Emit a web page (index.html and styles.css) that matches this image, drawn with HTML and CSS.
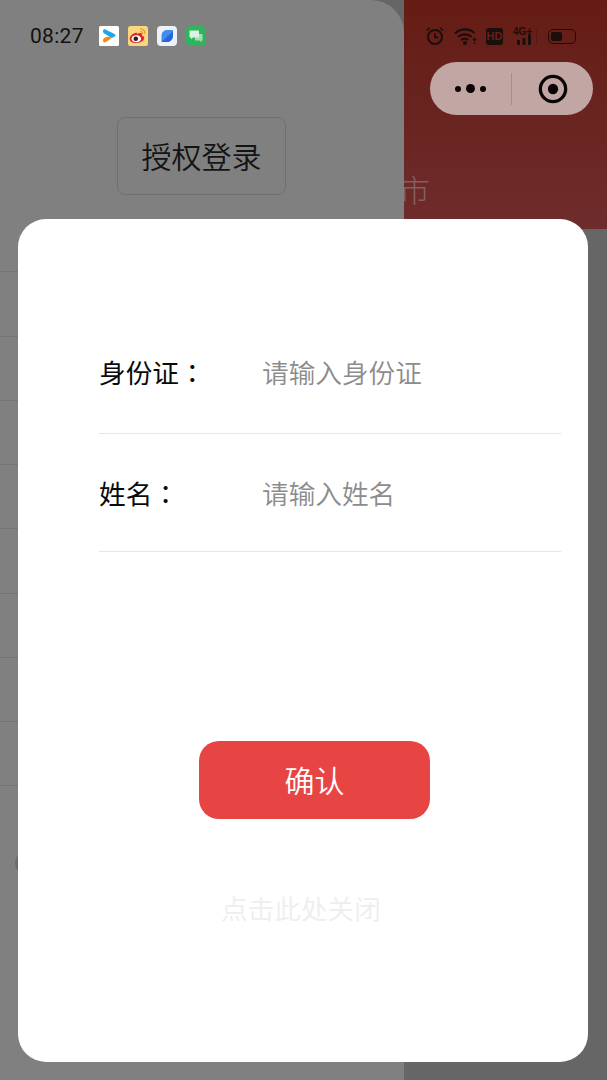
FILE: index.html
```html
<!DOCTYPE html>
<html lang="zh-CN">
  <head>
    <meta charset="UTF-8" />
    <meta name="viewport" content="width=device-width, initial-scale=1.0" />
    <title>授权登录</title>
    <link rel="stylesheet" href="styles.css">
  </head>
  <body>
    <div class="stage">
      <!--Side drawer-->
      <div class="drawer">
        <a href="" class="login">授权登录</a>
        <div class="rows">
          <div class="row"></div>
          <div class="row"></div>
          <div class="row"></div>
          <div class="row"></div>
          <div class="row"></div>
          <div class="row"></div>
          <div class="row"></div>
          <div class="row"></div>
          <div class="row"></div>
        </div>
        <div class="avatar"></div>
      </div>

      <!--Page behind the drawer-->
      <div class="page">
        <div class="header">
          <div class="city">市</div>
        </div>
      </div>

      <!--Status bar-->
      <div class="status">
        <div class="status-left">
          <span class="time">08:27</span>
          <svg class="app" viewBox="0 0 20 20">
            <rect width="20" height="20" rx="1.5" fill="#fff" />
            <path d="M4 5c0-1.500 1.400-2 2.500-1.400L15.500 8c1.300.7 1.300 2 0 2.700L12.500 12 9 9.800 5.300 7.600C4.400 7 4 6.200 4 5z" fill="#1aa7ee" />
            <path d="M4 14.500c0-2 1.500-3.200 3.500-3.500l3-.6 2 1.800-6 4C5.300 17 4 16 4 14.500z" fill="#f28a1c" />
          </svg>
          <svg class="app" viewBox="0 0 20 20">
            <rect width="20" height="20" rx="2.500" fill="#f9d77e" />
            <path d="M8.500 6.500C4.500 7.500 1.500 10.300 1.700 13c.2 2.600 3.300 4.300 7.100 4.100 4.200-.2 7.400-2.500 7.400-5 0-1.500-1.400-2.200-2.400-2.500.5-1.300.2-2.300-1-2.600-1.100-.3-2.600.1-3.900.9-.1-.6 0-1-.4-1.400z" fill="#e0242c" />
            <ellipse cx="8.300" cy="12.700" rx="4.800" ry="3.500" fill="#fff" />
            <circle cx="7.800" cy="12.800" r="2.300" fill="#222" />
            <path d="M12 3c2.800-.5 5.300 2 4.800 5M12.300 5.500c1.300-.2 2.400 1 2.200 2.300" fill="none" stroke="#f08a24" stroke-width="1.100" />
          </svg>
          <svg class="app" viewBox="0 0 20 20">
            <rect width="20" height="20" rx="4" fill="#eef2f8" />
            <path d="M4.500 10c0-3.500 2.300-6 5.500-6h6v6c0 3.500-2.500 6-5.800 6H4.500z" fill="#3f8df0" />
            <path d="M4.500 16L15.800 5.500c.9 4.500-.9 10.500-5.600 10.500z" fill="#2862dc" />
          </svg>
          <svg class="app" viewBox="0 0 20 20">
            <rect width="20" height="20" rx="4.500" fill="#2fb35c" />
            <path d="M9 8h7.500v6.500h-1V16l-2-1.500H9z" fill="#a5dcb3" />
            <path d="M3.500 4.500h9.500v7H7L5 13.200v-1.700H3.500z" fill="#dcf1e1" />
          </svg>
        </div>
        <div class="status-right">
          <svg class="alarm" viewBox="0 0 20 20">
            <circle cx="10" cy="11" r="7" fill="none" stroke="#1c0e0b" stroke-width="2" />
            <path d="M10 7v4.300h3.200M2 4.500L4.500 2M18 4.500L15.500 2" fill="none" stroke="#1c0e0b" stroke-width="1.700" />
          </svg>
          <svg class="wifi" viewBox="0 0 24 18">
            <path d="M1 6.500C6.500 1.200 15 1 20.500 6M4 10c3.800-3.400 9.500-3.500 13.500-.2M7.300 13c2-1.500 5-1.500 7 0" fill="none" stroke="#1c0e0b" stroke-width="2.200" />
            <circle cx="11" cy="16" r="2" fill="#1c0e0b" />
            <path d="M20.500 10.500v3M18.800 12l1.700 1.700 1.700-1.700M20.500 17v-2" fill="none" stroke="#1c0e0b" stroke-width="1.300" />
          </svg>
          <span class="hd">HD</span>
          <div class="signal">
            <span class="net">4G+</span>
            <svg class="bars" viewBox="0 0 14 11">
              <path d="M0 6h3v5H0zM5.500 4h3v7h-3zM11 0h3v11h-3z" fill="#1c0e0b" />
            </svg>
          </div>
          <span class="sep"></span>
          <div class="battery"><span class="level"></span></div>
        </div>
      </div>

      <!--Capsule button-->
      <div class="capsule">
        <div class="more">
          <span class="dot"></span>
          <span class="dot big"></span>
          <span class="dot"></span>
        </div>
        <span class="capsule-line"></span>
        <svg class="target" viewBox="0 0 32 32">
          <circle cx="16" cy="16" r="13.500" fill="none" stroke="#0a0505" stroke-width="3.500" />
          <circle cx="16" cy="16" r="5.500" fill="#0a0505" />
        </svg>
      </div>

      <!--Login dialog-->
      <div class="modal">
        <div class="form">
          <div class="field first">
            <span class="label">身份证<span class="colon" lang="zh-TW">：</span></span>
            <span class="hint">请输入身份证</span>
          </div>
          <div class="field">
            <span class="label">姓名<span class="colon" lang="zh-TW">：</span></span>
            <span class="hint">请输入姓名</span>
          </div>
        </div>
        <a href="" class="confirm">确认</a>
        <div class="close">点击此处关闭</div>
      </div>
    </div>
  </body>
</html>
```

FILE: styles.css
```css
body {
  margin: 0;
  padding: 0;
  font-family: "Noto Sans CJK SC", "Noto Sans", sans-serif;
}
a {
  text-decoration: none;
}
.stage {
  width: 607px;
  height: 1080px;
  position: relative;
  display: flex;
  overflow: hidden;
  background: #666666;
}

/* drawer */
.drawer {
  width: 404px;
  flex-shrink: 0;
  position: relative;
  z-index: 1;
  padding-top: 117px;
  box-sizing: border-box;
  background: #808080;
  border-top-right-radius: 33px;
}
.login {
  display: block;
  width: 169px;
  height: 78px;
  margin-left: 117px;
  box-sizing: border-box;
  border: 1px solid #6f6f6f;
  border-radius: 8px;
  color: #141414;
  font-size: 30px;
  font-weight: 350;
  line-height: 74px;
  text-align: center;
}
.rows {
  margin-top: 13px;
}
.row {
  height: 64.25px;
  box-sizing: border-box;
  border-bottom: 1px solid #747474;
}
.avatar {
  width: 24px;
  height: 24px;
  margin: 65px 0 0 15px;
  border-radius: 50%;
  background: #6c6c6c;
}

/* page behind */
.page {
  flex: 1;
}
.header {
  height: 229px;
  padding-top: 167px;
  box-sizing: border-box;
  background: linear-gradient(#651c14, #6e2c2c);
}
.city {
  margin-left: -5px;
  color: #82605e;
  font-size: 31px;
  font-weight: 300;
  line-height: 44px;
}

/* status bar */
.status {
  position: absolute;
  z-index: 2;
  top: 24px;
  left: 30px;
  width: 546px;
  height: 24px;
  display: flex;
  align-items: center;
  justify-content: space-between;
}
.status-left {
  display: flex;
  align-items: center;
  gap: 9px;
}
.time {
  width: 60px;
  color: #111;
  font-family: Roboto, sans-serif;
  font-size: 21px;
  letter-spacing: 0.3px;
}
.app {
  width: 20px;
  height: 20px;
}
.status-right {
  display: flex;
  align-items: center;
}
.alarm {
  width: 20px;
  height: 20px;
}
.wifi {
  width: 24px;
  height: 18px;
  margin-left: 9px;
}
.hd {
  width: 17px;
  height: 17px;
  margin-left: 8px;
  border-radius: 3px;
  background: #1c0e0b;
  color: #6a2018;
  font-family: "Liberation Sans", sans-serif;
  font-size: 11px;
  font-weight: 700;
  line-height: 17px;
  text-align: center;
}
.signal {
  width: 20px;
  height: 17px;
  margin-left: 10px;
  display: flex;
  flex-direction: column;
}
.net {
  color: #1c0e0b;
  font-family: "Liberation Sans", sans-serif;
  font-size: 10px;
  font-weight: 700;
  line-height: 8px;
}
.bars {
  width: 14px;
  height: 11px;
  margin: -2px 0 0 4px;
}
.sep {
  width: 1px;
  height: 16px;
  margin-left: 3px;
  background: #54191a;
}
.battery {
  width: 28px;
  height: 15px;
  margin-left: 11px;
  padding: 2px;
  box-sizing: border-box;
  border: 1.500px solid #1c0e0b;
  border-radius: 5px;
}
.level {
  display: block;
  width: 11px;
  height: 100%;
  border-radius: 2px;
  background: #1c0e0b;
}

/* capsule */
.capsule {
  position: absolute;
  z-index: 2;
  top: 62px;
  left: 430px;
  width: 163px;
  height: 53px;
  display: flex;
  align-items: center;
  border-radius: 27px;
  background: #c1a6a4;
}
.more {
  width: 81px;
  display: flex;
  align-items: center;
  justify-content: center;
  gap: 5px;
}
.dot {
  width: 6px;
  height: 6px;
  border-radius: 50%;
  background: #0a0505;
}
.dot.big {
  width: 9px;
  height: 9px;
}
.capsule-line {
  width: 1px;
  height: 32px;
  background: #a98d8b;
}
.target {
  width: 30px;
  height: 30px;
  margin-left: 26px;
}

/* dialog */
.modal {
  position: absolute;
  z-index: 3;
  top: 219px;
  left: 18px;
  width: 570px;
  height: 843px;
  padding-top: 94px;
  box-sizing: border-box;
  border-radius: 28px;
  background: #ffffff;
}
.form {
  margin: 0 27px 0 81px;
}
.field {
  height: 116px;
  padding-bottom: 1px;
  display: flex;
  align-items: center;
  font-size: 26.67px;
  border-bottom: 1px solid #e6e6e6;
}
.field.first {
  padding-bottom: 4px;
}
.label {
  width: 163px;
  color: #0a0a0a;
}
.colon {
  font-family: "Noto Sans CJK TC", sans-serif;
}
.hint {
  color: #8c8c8c;
  font-weight: 350;
}
.confirm {
  display: block;
  width: 231px;
  height: 78px;
  margin: 189px 0 0 181px;
  border-radius: 20px;
  background: #e64543;
  color: #ffffff;
  font-size: 30px;
  font-weight: 350;
  line-height: 76px;
  text-align: center;
}
.close {
  margin: 69px 0 0 203px;
  color: #eeeeee;
  font-size: 26.67px;
  font-weight: 350;
  line-height: 40px;
}
```
